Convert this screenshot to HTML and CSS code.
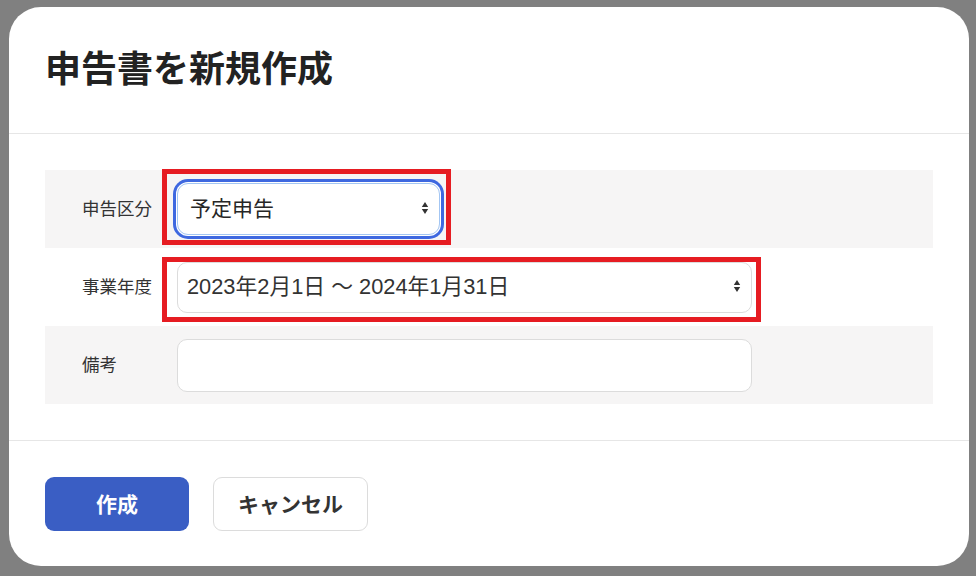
FILE: index.html
```html
<!DOCTYPE html>
<html lang="ja">
<head>
<meta charset="utf-8">
<title>申告書を新規作成</title>
<link rel="stylesheet" href="styles.css">
</head>
<body>
<div class="modal">
  <div class="modal-header">
    <h1 class="title">申告書を新規作成</h1>
  </div>
  <div class="modal-body">
    <div class="row shaded">
      <div class="label">申告区分</div>
      <div class="field">
        <div class="select select-focus">
          <span class="select-text">予定申告</span>
          <svg class="arrows" width="8" height="14" viewBox="0 0 8 14"><path d="M4 1 L7.2 6 H0.8 Z M4 13 L7.2 8 H0.8 Z" fill="#333"/></svg>
        </div>
      </div>
      <div class="mark mark-1"></div>
    </div>
    <div class="row">
      <div class="label">事業年度</div>
      <div class="field">
        <div class="select select-wide">
          <span class="select-text date">2023年2月1日 ～ 2024年1月31日</span>
          <svg class="arrows" width="8" height="14" viewBox="0 0 8 14"><path d="M4 1 L7.2 6 H0.8 Z M4 13 L7.2 8 H0.8 Z" fill="#333"/></svg>
        </div>
      </div>
      <div class="mark mark-2"></div>
    </div>
    <div class="row shaded">
      <div class="label">備考</div>
      <div class="field">
        <input class="text-input" type="text">
      </div>
    </div>
  </div>
  <div class="modal-footer">
    <button class="btn btn-primary">作成</button>
    <button class="btn btn-secondary">キャンセル</button>
  </div>
</div>
</body>
</html>
```

FILE: styles.css
```css
* { box-sizing: border-box; }
html, body { margin: 0; padding: 0; }
body {
  background: #808080;
  padding: 7px 7px 10px 9px;
  font-family: "Liberation Sans", "Noto Sans CJK JP", sans-serif;
  color: #222;
}
.modal {
  width: 960px;
  height: 559px;
  background: #fff;
  border-radius: 32px;
  display: flex;
  flex-direction: column;
}
.modal-header {
  height: 127px;
  border-bottom: 1px solid #e6e6e6;
  display: flex;
  align-items: center;
  padding: 0 0 8px 36px;
}
.title {
  margin: 0;
  font-family: "Noto Sans CJK JP", sans-serif;
  font-size: 36px;
  font-weight: 700;
  line-height: 1;
  color: #222;
}
.modal-body {
  padding: 36px 36px 36px 36px;
  border-bottom: 1px solid #e6e6e6;
}
.row {
  position: relative;
  height: 78px;
  display: flex;
  align-items: center;
  padding-left: 37px;
}
.row.shaded { background: #f6f5f5; }
.label {
  width: 95px;
  font-family: "Noto Sans CJK JP", sans-serif;
  font-size: 17.5px;
  color: #333;
  padding-bottom: 4px;
}
.field { display: flex; align-items: center; }
.select {
  position: relative;
  height: 52px;
  background: #fff;
  border: 1px solid #dcdcdc;
  border-radius: 10px;
  display: flex;
  align-items: center;
}
.select-focus {
  width: 263px;
  border: 1px solid #a3c6f3;
  border-radius: 11px;
  box-shadow: 0 0 0 1px #fff, 0 0 0 4px #3e68e0;
  padding: 0 0 3px 12px;
}
.select-wide {
  width: 575px;
  height: 51px;
  padding-left: 9px;
}
.select-text {
  font-family: "Noto Sans CJK JP", sans-serif;
  font-size: 21px;
  color: #262626;
  line-height: 1;
}
.select-text.date {
  font-family: "Liberation Sans", "Noto Sans CJK JP", sans-serif;
  font-size: 21.8px;
  color: #333;
}
.arrows {
  position: absolute;
  right: 10px;
  top: 50%;
  margin-top: -8px;
}
.text-input {
  width: 575px;
  height: 53px;
  border: 1px solid #dcdcdc;
  border-radius: 10px;
  background: #fff;
  outline: none;
  margin: 0;
  padding: 0 12px;
}
.mark {
  position: absolute;
  border: 5px solid #e61c22;
  pointer-events: none;
}
.mark-1 { left: 117px; top: -1px; width: 289px; height: 76px; }
.mark-2 { left: 117px; top: 9px; width: 599px; height: 65px; }
.modal-footer {
  padding: 36px 0 0 36px;
  display: flex;
  gap: 24px;
}
.btn {
  height: 54px;
  border-radius: 9px;
  font-family: "Noto Sans CJK JP", sans-serif;
  font-size: 21px;
  font-weight: 700;
  cursor: pointer;
  margin: 0;
  padding: 0 0 3px 0;
}
.btn-primary {
  width: 144px;
  background: #3a5ec4;
  border: none;
  color: #fff;
}
.btn-secondary {
  width: 155px;
  background: #fff;
  border: 1px solid #dcdcdc;
  color: #333;
}
```
